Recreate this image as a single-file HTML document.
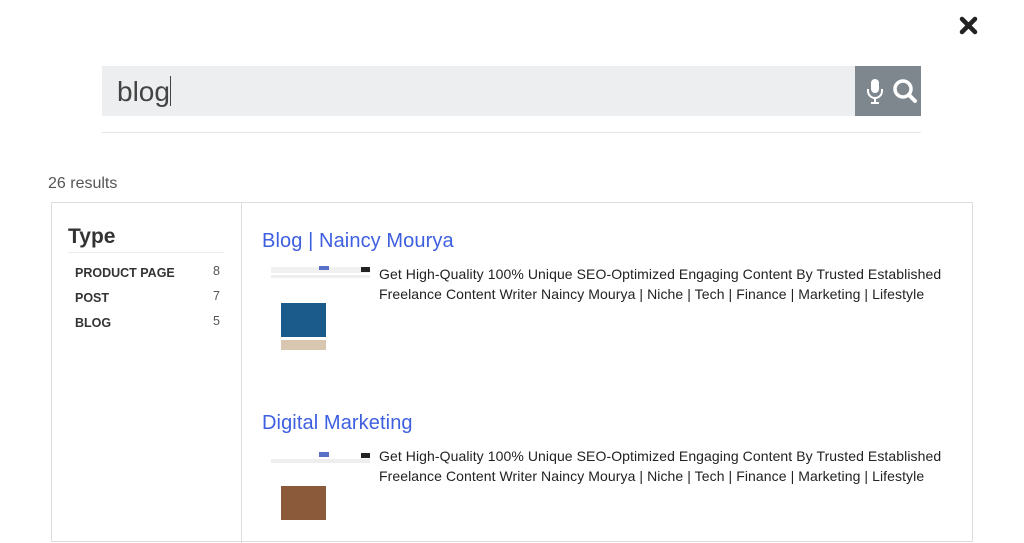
<!DOCTYPE html>
<html><head><style>
*{margin:0;padding:0;box-sizing:border-box}
body{width:1024px;height:534px;overflow:hidden;background:#fff;font-family:"Liberation Sans",sans-serif;position:relative}
.abs{position:absolute}
.search{left:102px;top:66px;width:819px;height:50px;background:#eceef0}
.btn{left:855px;top:66px;width:66px;height:50px;background:#7f878e}
.q{left:117px;top:76px;font-size:28px;color:#444}
.rule{left:102px;top:132px;width:819px;height:1px;background:#e6e6e6}
.cnt{left:48px;top:175px;font-size:16px;color:#555}
.box{left:51px;top:202px;width:922px;height:340px;border:1px solid #ddd}
.div{left:241px;top:203px;width:1px;height:340px;background:#ddd}
.type{left:68px;top:225px;font-size:21px;font-weight:bold;color:#333}
.tl{left:68px;top:252px;width:156px;height:1px;background:#e8ecf0}
.it{left:75px;font-size:12.5px;font-weight:bold;color:#333}
.n{left:213px;font-size:12.5px;color:#555}
.t{left:262px;font-size:20px;color:#3d5fe0;letter-spacing:0.1px}
.d{left:379px;font-size:14px;line-height:20px;color:#222;width:590px;letter-spacing:0.08px}
.th{left:271px;width:99px;height:86px;background:#fff}
</style></head><body>
<svg class="abs" style="left:959px;top:16px" width="19" height="19" viewBox="0 0 19 19"><path d="M3 3L16 16M16 3L3 16" stroke="#222" stroke-width="4.5" stroke-linecap="round"/></svg>
<div class="abs search"></div>
<div class="abs q">blog<span style="display:inline-block;width:1px;height:30px;background:#444;vertical-align:-5px"></span></div>
<div class="abs btn"></div>
<svg class="abs" style="left:862px;top:76px" width="56" height="32" viewBox="0 0 56 32"><rect x="9" y="3" width="8" height="14" rx="4" fill="#fff"/><path d="M6 13v2a7 7 0 0 0 14 0v-2M13 22v5M9 27h8" stroke="#fff" stroke-width="2" fill="none"/><circle cx="41" cy="13" r="8" stroke="#fff" stroke-width="3.5" fill="none"/><path d="M47 19l6 6" stroke="#fff" stroke-width="4" stroke-linecap="round"/></svg>
<div class="abs rule"></div>
<div class="abs cnt">26 results</div>
<div class="abs box"></div>
<div class="abs div"></div>
<div class="abs type">Type</div>
<div class="abs tl"></div>
<div class="abs it" style="top:266px">PRODUCT PAGE</div><div class="abs n" style="top:264px">8</div>
<div class="abs it" style="top:291px">POST</div><div class="abs n" style="top:289px">7</div>
<div class="abs it" style="top:316px">BLOG</div><div class="abs n" style="top:314px">5</div>

<div class="abs t" style="top:230px">Blog | Naincy Mourya</div>
<div class="abs th" style="top:265px">
<div class="abs" style="left:0;top:2px;width:99px;height:6px;background:#f0f0f0"></div>
<div class="abs" style="left:48px;top:1px;width:10px;height:4px;background:#5870c8"></div>
<div class="abs" style="left:90px;top:2px;width:9px;height:5px;background:#222"></div>
<div class="abs" style="left:0;top:10px;width:99px;height:3px;background:#eee"></div>
<div class="abs" style="left:10px;top:38px;width:45px;height:34px;background:#1a5b8c"></div>
<div class="abs" style="left:10px;top:75px;width:45px;height:10px;background:#d9c6b0"></div>
</div>
<div class="abs d" style="top:264px">Get High-Quality 100% Unique SEO-Optimized Engaging Content By Trusted Established Freelance Content Writer Naincy Mourya | Niche | Tech | Finance | Marketing | Lifestyle</div>

<div class="abs t" style="top:412px">Digital Marketing</div>
<div class="abs th" style="top:448px">
<div class="abs" style="left:0;top:11px;width:99px;height:4px;background:#eee"></div>
<div class="abs" style="left:48px;top:4px;width:10px;height:5px;background:#5870c8"></div>
<div class="abs" style="left:90px;top:5px;width:9px;height:5px;background:#222"></div>
<div class="abs" style="left:10px;top:38px;width:45px;height:34px;background:#8a5a3a"></div>
</div>
<div class="abs d" style="top:446px">Get High-Quality 100% Unique SEO-Optimized Engaging Content By Trusted Established Freelance Content Writer Naincy Mourya | Niche | Tech | Finance | Marketing | Lifestyle</div>
</body></html>
